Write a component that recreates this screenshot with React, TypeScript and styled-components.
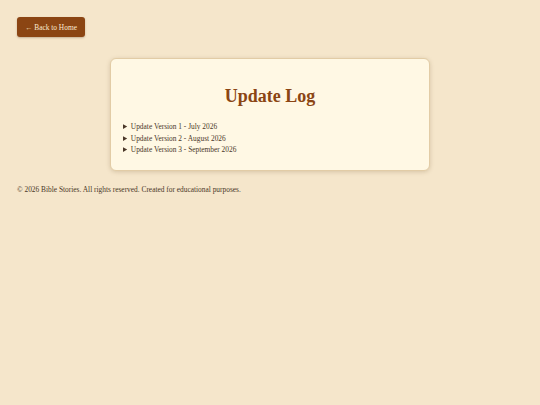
import styled, { createGlobalStyle } from 'styled-components';

const GlobalStyle = createGlobalStyle`
  html, body {
    margin: 0;
    padding: 0;
    background: #f5e6cb;
    font-family: "Liberation Serif", Georgia, serif;
    color: #4a3728;
  }
`;

const Page = styled.div`
  min-height: 405px;
  padding: 17px;
  box-sizing: border-box;
`;

const Nav = styled.nav`
  display: flex;
`;

const BackButton = styled.a`
  display: flex;
  align-items: center;
  height: 20px;
  padding: 0 8px;
  background: #8b4513;
  color: #fbe9d0;
  border-radius: 3px;
  font-size: 7.4px;
  text-decoration: none;
  box-shadow: 0 1px 2px rgba(90, 50, 20, 0.3);
`;

const Card = styled.section`
  width: 320px;
  margin: 21px auto 0;
  box-sizing: border-box;
  padding: 25px 12px 14px;
  background: #fff8e4;
  border: 1px solid #e2cca6;
  border-radius: 6px;
  box-shadow: 0 1px 4px rgba(120, 90, 50, 0.25);
`;

const Title = styled.h1`
  margin: 0 0 13px;
  text-align: center;
  font-size: 18px;
  line-height: 24px;
  font-weight: bold;
  color: #8b4513;
`;

const Entry = styled.details`
  font-size: 7.4px;
  line-height: 11.5px;
  color: #4a3728;

  summary {
    cursor: pointer;
  }
`;

const Footer = styled.footer`
  margin-top: 14px;
  font-size: 7.4px;
  color: #4a3728;
`;

const updates = [
  'Update Version 1 - July 2026',
  'Update Version 2 - August 2026',
  'Update Version 3 - September 2026',
];

export default function App() {
  return (
    <Page>
      <GlobalStyle />
      <Nav>
        <BackButton href="#">← Back to Home</BackButton>
      </Nav>
      <Card>
        <Title>Update Log</Title>
        {updates.map(u => (
          <Entry key={u}>
            <summary>{u}</summary>
          </Entry>
        ))}
      </Card>
      <Footer>© 2026 Bible Stories. All rights reserved. Created for educational purposes.</Footer>
    </Page>
  );
}
